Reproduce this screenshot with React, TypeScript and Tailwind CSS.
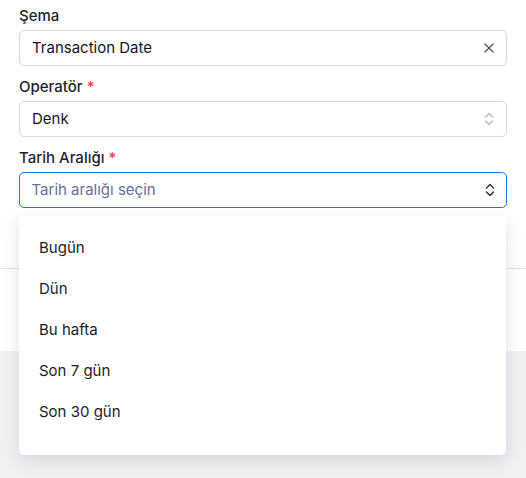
import React from "react";

function UpDown({ color }: { color: string }) {
  return (
    <svg width="10" height="14" viewBox="0 0 10 14" fill="none" stroke={color} strokeWidth="1.4" strokeLinecap="round" strokeLinejoin="round">
      <path d="M1.5 5 L5 1.5 L8.5 5" />
      <path d="M1.5 9 L5 12.5 L8.5 9" />
    </svg>
  );
}

function XIcon() {
  return (
    <svg width="10" height="10" viewBox="0 0 10 10" fill="none" stroke="#50506c" strokeWidth="1.3" strokeLinecap="round">
      <path d="M1 1 L9 9" />
      <path d="M9 1 L1 9" />
    </svg>
  );
}

const items = ["Bugün", "Dün", "Bu hafta", "Son 7 gün", "Son 30 gün"];

export default function App() {
  return (
    <div className="w-[526px] h-[478px] bg-[#f1f1f4] relative overflow-hidden" style={{ fontFamily: "Inter, 'Noto Sans', sans-serif" }}>
      <div className="bg-white border-b border-[#e4e4ec] px-[19px] pt-[5px] h-[269px] flex flex-col">
        <label className="text-[15px] font-medium text-[#1f1f2e] h-[25px] leading-[22px]">Şema</label>
        <div className="h-[36px] border border-[#d8d8e4] rounded-[5px] flex items-center justify-between pl-[12px] pr-[12px]">
          <span className="text-[15px] text-[#15151f]">Transaction Date</span>
          <XIcon />
        </div>
        <label className="text-[15px] font-medium text-[#1f1f2e] mt-[11px] h-[24px] leading-[20px]">
          Operatör <span className="text-[#e5484d]">*</span>
        </label>
        <div className="h-[36px] border border-[#d8d8e4] rounded-[5px] flex items-center justify-between pl-[12px] pr-[12px]">
          <span className="text-[15px] text-[#15151f]">Denk</span>
          <UpDown color="#b8b8c8" />
        </div>
        <label className="text-[15px] font-medium text-[#1f1f2e] mt-[11px] h-[24px] leading-[20px]">
          Tarih Aralığı <span className="text-[#e5484d]">*</span>
        </label>
        <div className="h-[36px] border-[1.5px] border-[#1a73e8] rounded-[5px] flex items-center justify-between pl-[11.5px] pr-[11.5px]">
          <span className="text-[15px] text-[#6c6c98]">Tarih aralığı seçin</span>
          <UpDown color="#2a2a3a" />
        </div>
      </div>
      <div className="bg-white h-[82px]" />

      <div className="absolute left-[19px] top-[216px] w-[487px] bg-white rounded-b-[5px] shadow-[0_6px_18px_rgba(30,30,60,0.13)] pt-[12px] pb-[22px]">
        {items.map((it) => (
          <div key={it} className="h-[41px] flex items-center px-[20px] text-[15px] text-[#1c1c28]">
            {it}
          </div>
        ))}
      </div>
    </div>
  );
}
